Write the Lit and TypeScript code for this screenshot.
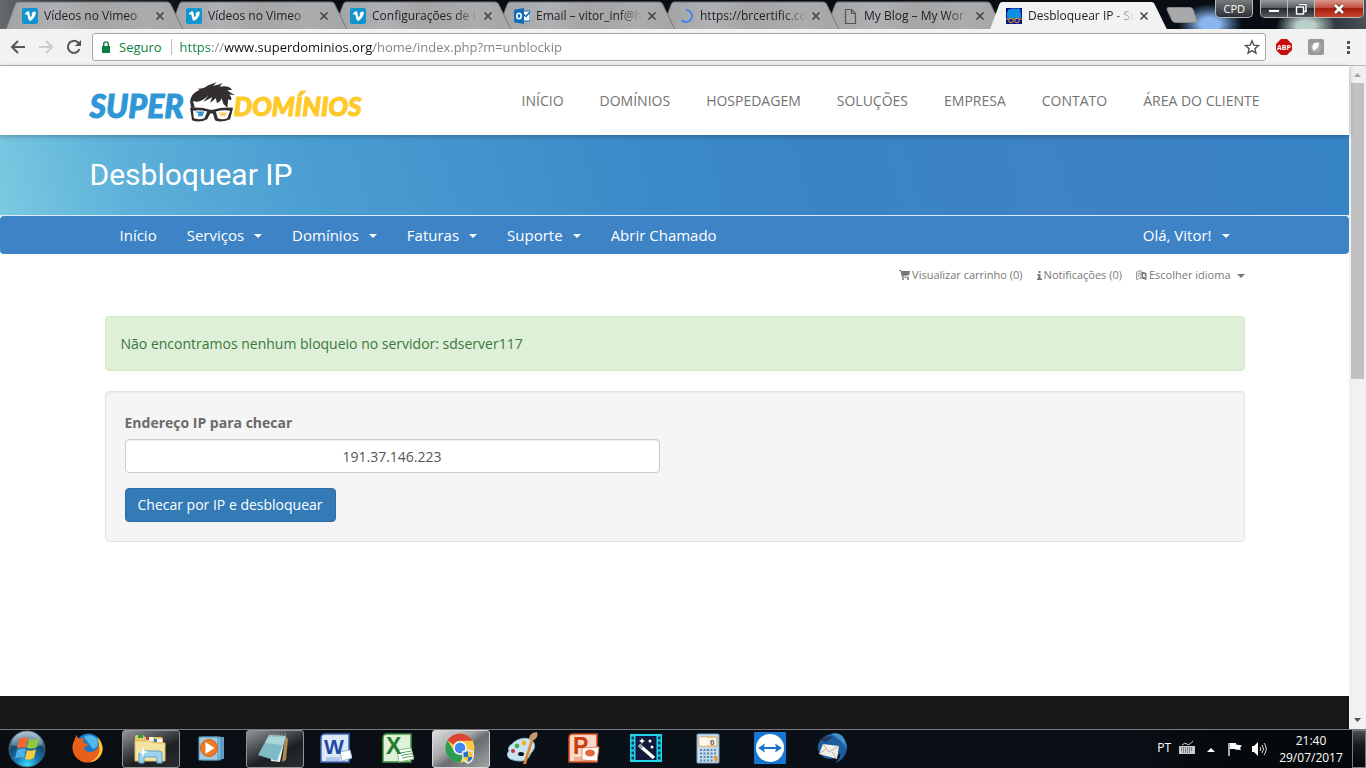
import { LitElement, html, css, svg, nothing } from "lit";
import { customElement, property } from "lit/decorators.js";
import { classMap } from "lit/directives/class-map.js";
import { styleMap } from "lit/directives/style-map.js";

const vimeo = svg`<rect width="16" height="16" rx="2" fill="#1295cf"/><path d="M2.8 5.4 5.2 3.6c1.2-.8 1.9-.3 2.2 1l.8 3.8c.2.9.6.9 1.1.2.8-1.1 1.2-1.9.2-2 .5-2.2 1.7-3.2 3.2-3 1.6.2 1.4 2 .4 4-1.2 2.3-3.6 5.2-5 5.2-1.2 0-1.7-1.4-2.1-3.3-.4-1.7-.6-3.3-1.2-3.3l-1.1.6z" fill="#fff"/>`;

const favicons: Record<string, unknown> = {
  vimeo,
  outlook: svg`<path d="M8 3h8v10H8z" fill="#fff" stroke="#0f6cba"/><path d="m8 5 4 3.500L16 4" fill="none" stroke="#0f6cba" stroke-width="1.500"/><path d="M0 1.800 10 0v16L0 14.200z" fill="#0f6cba"/><ellipse cx="5" cy="8" rx="2.200" ry="2.700" fill="none" stroke="#fff" stroke-width="1.600"/>`,
  loading: svg`<path d="M8 2a6 6 0 1 1-4.500 10" fill="none" stroke="#4a86f0" stroke-width="2"/>`,
  page: svg`<path d="M3.500 1.500h6l4 4v10h-10zM9.500 1.500v4h4" fill="none" stroke="#555" stroke-width="1.200"/>`,
  site: svg`<path d="M0 0h16v16H0z" fill="#0a118f"/><path d="M1 10V4l1-1V1l2 1 1-2 2 1 2-1 1 1 3-1v1l2 1-1 2 1 1v5z" fill="#0d8fdd"/><path d="M0 11h16" stroke="#e8a23b"/><circle cx="5" cy="12.500" r="2.300" fill="#15207d" stroke="#e8a23b"/><circle cx="11" cy="12.500" r="2.300" fill="#15207d" stroke="#e8a23b"/>`,
};

@customElement("browser-tab")
class BrowserTab extends LitElement {
  @property() icon = "page";
  @property() label = "";
  @property({ type: Boolean }) active = false;

  static styles = css`
    :host { display: block; height: 28px; }
    .tab { position: relative; display: flex; align-items: center; height: 28px; padding: 1px 19px 0 16px; box-sizing: border-box; }
    .shape { position: absolute; inset: 0; width: 100%; height: 100%; z-index: -1; }
    .favicon { width: 16px; height: 16px; flex: none; }
    .title { flex: 1; min-width: 0; margin: 0 1px 0 6px; overflow: hidden; white-space: nowrap; font-size: 12px; line-height: 16px; color: #222; mask-image: linear-gradient(90deg, #000 76%, transparent 97%); }
    .close { display: flex; border: 0; padding: 0; background: none; }
    .close svg { width: 10px; height: 10px; }
  `;

  render() {
    return html`<div class="tab">
      <svg class="shape" viewBox="0 0 178 28" preserveAspectRatio="none">
        <defs><linearGradient id="glass"><stop offset="0" stop-color="#a2a3a4"/><stop offset=".28" stop-color="#afb1b4"/><stop offset=".5" stop-color="#a5a5a6"/><stop offset=".8" stop-color="#aaacae"/><stop offset="1" stop-color="#a5a6a6"/></linearGradient></defs>
        <path d="M0 28.500 9 4Q10 1 12 1H161Q164 1 165 4L177 28.500" fill=${this.active ? "#f2f2f2" : "url(#glass)"} stroke=${this.active ? "none" : "#77797b"}></path>
      </svg>
      <svg class="favicon" viewBox="0 0 16 16">${favicons[this.icon]}</svg>
      <span class="title">${this.label}</span>
      <button class="close" aria-label="Fechar guia"><svg viewBox="0 0 10 10"><path d="m1.500 1.500 7 7m0-7-7 7" stroke="#444" stroke-width="1.600"/></svg></button>
    </div>`;
  }
}

const taskIcons: Record<string, unknown> = {
  firefox: svg`<circle cx="16.500" cy="14.500" r="13" fill="#1f78c4"/><path d="M12 5c3-3 10-2 13 2 2 5 0 9-4 10z" fill="#53b9ea"/><path d="M5 3c0 2 1 3 2 4 2-1 4-1 6 0-2 1-3 3-1 4l4 1c0 2-3 2-4 4 1 4 6 5 10 3 5-2 6-8 3-12 5 3 7 9 5 14-3 8-12 11-19 9C2 27-2 17 2 9c1-2 1-4 3-6z" fill="#e9601a"/><path d="M25 5c6 5 7 13 3 19-2 3-6 6-10 6 7-3 11-9 9-17 0-3-1-6-2-8z" fill="#fbcb35"/>`,
  folder: svg`<path d="M1 5q0-2 2-2h6l2 2h16q2 0 2 2v20H1z" fill="#e5c766"/><path d="M4 3h5v3H4z" fill="#2f9e3f"/><path d="M12 5h7v4h-7z" fill="#fff"/><path d="M12 5h3v3h-3z" fill="#cf3b2e"/><path d="M20 7h8v3h-8z" fill="#fff"/><path d="M20 7h3v3h-3z" fill="#2a7fd0"/><path d="M1 9h16l2 2h12v18H1z" fill="#f6e3a1" stroke="#dcc066"/><path d="M5 31v-9q0-3 3-3h17q3 0 3 3v9h-5v-6H10v6z" fill="#9ed3ee" stroke="#5ba4cf"/><path d="m9 14 1 5 5 1-5 1-1 5-1-5-5-1 5-1z" fill="#fff"/>`,
  media: svg`<path d="M9 5h19v22H9z" fill="#5e9fc7"/><path d="M6 5h19v23H6z" fill="#82bddd" stroke="#4d88b0"/><path d="M3 5h19v23H3z" fill="#9dcbe3" stroke="#5f9abc"/><circle cx="13" cy="16" r="8.500" fill="#ee7a24" stroke="#d45f10"/><path d="m9.500 10 9 6-9 6z" fill="#fff"/>`,
  notepad: svg`<path d="m27 4 3 3-2 21-4 2z" fill="#a98851"/><path d="m11 4 16 1-5 25-9-1z" fill="#e9f1f2"/><path d="m11 3 17 1-9 25-19-6z" fill="#80bac7"/><path d="m11 3 17 1-3 9-18-2z" fill="#a9d5dc"/><path d="M12 1v4m3-4v4m3-4v4m3-4v4m3-4v4m3-4v4" stroke="#8b9898"/>`,
  word: svg`<path d="M1 6q0-4 4-4h24v28H1z" fill="#dce7f8" stroke="#3d68b4" stroke-width="1.500"/><path d="M6 26h14M6 28h14" stroke="#8ba7d6"/><path d="m20 20 10-2 2 8-10 3z" fill="#fff" stroke="#9cb4db"/><text x="4" y="22" font-size="21" font-weight="700" font-family="Liberation Sans" fill="#1d4aa4">W</text>`,
  excel: svg`<path d="M1 6q0-4 4-4h24v28H1z" fill="#e0f1d9" stroke="#3b9143" stroke-width="1.500"/><path d="m15 18 14-2 3 11-15 3z" fill="#fff" stroke="#8abd83"/><path d="m18 21 11-2m-10 4.500 11-2M20 26l11-2" stroke="#52a35a"/><text x="4" y="22" font-size="23" font-weight="700" font-family="Liberation Sans" fill="#217b30">X</text>`,
  chrome: svg`<circle cx="16" cy="16" r="14.500" fill="#f8cb42"/><path d="M3.500 8.500A14.500 14.500 0 0 1 28.600 8.800H16a7 7 0 0 0-6.300 4z" fill="#dc4437"/><path d="M3.500 8.500A14.500 14.500 0 0 0 16 30.500l6-11a7 7 0 0 1-12.300-1z" fill="#2d9c56"/><circle cx="16" cy="16" r="6.800" fill="#fff"/><circle cx="16" cy="16" r="5.400" fill="#4387f4"/><path d="M24 17q3 2 6 2v5q0 5-6 8-6-3-6-8v-5q3 0 6-2z" fill="#e6e8ea"/><path d="M24 19v6h-4.500v-4.500Q22 20.300 24 19zM24 25h4.500q-.5 3-4.500 5z" fill="#2a70c9"/><path d="M24 19q2 1.300 4.500 1.500V25H24zM19.500 25H24v5q-4-2-4.500-5z" fill="#f4c62f"/>`,
  paint: svg`<path d="M4 27q-5-4-1-8-2-4 3-7C12 5 25 4 28 11c2 6-2 8-4 12-2 6-9 8-20 4z" fill="#c9e4f4" stroke="#7fa9c5"/><ellipse cx="15" cy="22" rx="3" ry="2" fill="#0a0f16"/><circle cx="7" cy="19" r="2" fill="#c7352e"/><circle cx="11" cy="14" r="2.400" fill="#4caf43"/><circle cx="18" cy="11" r="2.400" fill="#ecb030"/><path d="m25 7 2 2-7 23h-3z" fill="#e18830"/><path d="M23 7q0-6 8-7 2 6-5 9z" fill="#c69e6b"/>`,
  powerpoint: svg`<path d="M1 6q0-4 4-4h24v28H1z" fill="#fbd9c9" stroke="#d24719" stroke-width="1.500"/><path d="M6 26h12M6 28h12" stroke="#e08a67"/><path d="m14 16 17-1-2 14-15-1z" fill="#fff" stroke="#e08a67"/><ellipse cx="22" cy="21" rx="5" ry="3.500" fill="#e2673b"/><text x="5" y="22" font-size="23" font-weight="700" font-family="Liberation Sans" fill="#cb3d0e">P</text>`,
  movie: svg`<path d="M0 2h32v28H0z" fill="#1fd4e8"/><path d="M5.500 4h21v24h-21z" fill="#111a3a"/><path d="M1.500 4.500h2.500v3H1.500zm0 5h2.500v3H1.500zm0 5h2.500v3H1.500zm0 5h2.500v3H1.500zm0 5h2.500v3H1.500zM28 4.500h2.500v3H28zm0 5h2.500v3H28zm0 5h2.500v3H28zm0 5h2.500v3H28zm0 5h2.500v3H28z" fill="#0c3e5e"/><path d="m9 13 15 13" stroke="#fff" stroke-width="3.500"/><path d="m9 13 3 3" stroke="#99a" stroke-width="3"/><path d="m12 6 1 2 2 1-2 1-1 2-1-2-2-1 2-1z" fill="#fff"/><circle cx="20" cy="9" r="1.500" fill="#fff"/><circle cx="22" cy="15" r="1.500" fill="#fff"/>`,
  calc: svg`<rect x="5" y="2" width="22" height="29" rx="1" fill="#c6dcec" stroke="#7da3bf"/><path d="M7 5h18v9H7z" fill="#fbf3e2" stroke="#e09b3d"/><path d="M7 5h8v9H7z" fill="#fff" opacity=".5"/><text x="18" y="13" font-size="8" font-weight="700" font-family="Liberation Sans" fill="#44515c">0</text><path d="M8 18h17M8 21.500h17M8 25h17M8 28.500h14" stroke="#5b86aa" stroke-width="2" stroke-dasharray="2 1.500"/><path d="M22.500 24h3v5.500h-3z" fill="#ed9438"/>`,
  teamviewer: svg`<rect width="32" height="32" rx="1" fill="#1577d4"/><circle cx="16" cy="16" r="14" fill="#fff"/><path d="m4 16 7-4.500-1 3.500h12l-1-3.500 7 4.500-7 4.500 1-3.500H10l1 3.500z" fill="#1573cf"/>`,
  thunderbird: svg`<path d="M4 9C10 0 24-1 29 8c5 9 0 20-10 23 4-3 6-7 5-10-3 7-14 8-19 2-4-5-4-10-1-14z" fill="#1e5d9f"/><path d="M15 2c6-2 12 0 14 7l2 8q-5-9-16-15z" fill="#3e93cb"/><path d="m7 12 16 2-2 13-18-5z" fill="#f1eee8"/><path d="m7 12 6 8 10-6M3 22l7-5m11 10-5-7" fill="none" stroke="#b7afa5"/><path d="M3 9q5-6 14-4l-7 5q-4-2-7-1z" fill="#253b60"/>`,
};

const tasks = [
  { icon: "firefox", name: "Mozilla Firefox" },
  { icon: "folder", name: "Windows Explorer", open: true },
  { icon: "media", name: "Windows Media Player" },
  { icon: "notepad", name: "Bloco de notas", open: true },
  { icon: "word", name: "Microsoft Word" },
  { icon: "excel", name: "Microsoft Excel" },
  { icon: "chrome", name: "Google Chrome", open: true, current: true },
  { icon: "paint", name: "Paint" },
  { icon: "powerpoint", name: "Microsoft PowerPoint" },
  { icon: "movie", name: "Movie Maker" },
  { icon: "calc", name: "Calculadora" },
  { icon: "teamviewer", name: "TeamViewer" },
  { icon: "thunderbird", name: "Thunderbird" },
];

@customElement("task-bar")
class TaskBar extends LitElement {
  static styles = css`
    :host { display: flex; flex: none; height: 39px; box-sizing: border-box; border-top: 1px solid #777b7f; background: linear-gradient(90deg, #0a0e13, #0a1018 50%, #0b0f18 82%, #05090b 90%); color: #fff; font: 12px/17px "Open Sans", sans-serif; }
    button { border: 0; padding: 0; background: none; font: inherit; color: inherit; }
    svg { display: block; }
    .start { width: 54px; margin-right: 4px; display: flex; justify-content: center; align-items: center; }
    .orb { width: 38px; height: 38px; }
    .tasks { display: flex; flex: 1; }
    .task { width: 58px; margin: 0 2px; height: 38px; padding: 0 2px 2px 0; display: flex; justify-content: center; align-items: center; box-sizing: border-box; border: 1px solid transparent; border-radius: 3px; }
    .task svg { width: 32px; height: 32px; }
    .open { border-color: #909395; background: linear-gradient(155deg, #92969a 0, #4a4e51 35%, #1c2023 60%, #2a2e31); }
    .current { border-color: #d6d8d9; background: linear-gradient(145deg, #dcdddf 0, #a6a8aa 38%, #6a6d70 55%, #a0a2a4); }
    .tray { display: flex; align-items: center; }
    .lang { margin: 0 8px 4px 0; }
    .icon { width: 16px; height: 16px; margin-right: 8px; }
    .clock { width: 72px; margin: 0 5px 0 0; text-align: center; }
    .desk { width: 14px; height: 38px; border: 1px solid #777b7e; background: linear-gradient(#4b4f52, #15191c 40%, #05080a); }
  `;

  render() {
    return html`
      <button class="start" aria-label="Iniciar">
        <svg class="orb" viewBox="0 0 38 38">
          <defs><radialGradient id="orb" cx=".5" cy=".95" r=".9"><stop offset="0" stop-color="#3be0ff"/><stop offset=".35" stop-color="#147bb5"/><stop offset=".7" stop-color="#164870"/><stop offset="1" stop-color="#8aaabd"/></radialGradient></defs>
          <circle cx="19" cy="19" r="18" fill="url(#orb)" stroke="#405c70"/>
          <path d="M4 15a15 14 0 0 1 30 0q-14 5-30 0z" fill="#fff" opacity=".28"/>
          <path d="M11 9q5-3 9-1l-2 10q-4-2-9 1z" fill="#ee6a34"/><path d="M21 9q5 2 10-1l-2 9q-5 3-10 1z" fill="#92c83e"/>
          <path d="M9 20q5-3 9-1l-2 9q-4-2-9 1z" fill="#4fb0e8"/><path d="M19 20q5 2 9-1l-2 9q-5 3-9 1z" fill="#fbca3a"/>
        </svg>
      </button>
      <nav class="tasks">
        ${tasks.map((t) => html`<button class=${classMap({ task: true, open: !!t.open, current: !!t.current })} aria-label=${t.name}><svg viewBox="0 0 32 32">${taskIcons[t.icon]}</svg></button>`)}
      </nav>
      <div class="tray">
        <span class="lang">PT</span>
        <svg class="icon" viewBox="0 0 16 16"><path d="M3 4q3-3 5-1t6-3" fill="none" stroke="#ccc"/><path d="M0 5h16v8H0z" fill="#c9cbcc"/><path d="M2 7h12M2 9h12M4 11h8" stroke="#333" stroke-dasharray="1 1"/></svg>
        <svg class="icon" viewBox="0 0 16 16"><path d="m4 11 4-4 4 4z" fill="#fff"/></svg>
        <svg class="icon" viewBox="0 0 16 16"><path d="M2 2v13" stroke="#fff" stroke-width="1.300"/><path d="M3 2h6v1.500l6 1-2 2.500 1 2-6-.5V8H3z" fill="#fff"/></svg>
        <svg class="icon" viewBox="0 0 16 16"><path d="M1 5h2l4-4v14l-4-4H1z" fill="#fff"/><path d="M9 6q1.500 2 0 4m2-6q3 4 0 8m2-10q4.500 6 0 12" fill="none" stroke="#ddd"/></svg>
        <div class="clock">21:40<br />29/07/2017</div>
        <button class="desk" aria-label="Mostrar área de trabalho"></button>
      </div>`;
  }
}

const url = "https://www.superdominios.org/home/index.php?m=unblockip";

const tabs = [
  { icon: "vimeo", label: "Vídeos no Vimeo" },
  { icon: "vimeo", label: "Vídeos no Vimeo" },
  { icon: "vimeo", label: "Configurações de I" },
  { icon: "outlook", label: "Email – vitor_inf@h" },
  { icon: "loading", label: "https://brcertific.co" },
  { icon: "page", label: "My Blog – My Wor" },
  { icon: "site", label: "Desbloquear IP - Su", active: true },
];

const siteLinks = ["INÍCIO", "DOMÍNIOS", "HOSPEDAGEM", "SOLUÇÕES", "EMPRESA", "CONTATO", "ÁREA DO CLIENTE"];

const menu = [
  { label: "Início" },
  { label: "Serviços", drop: true },
  { label: "Domínios", drop: true },
  { label: "Faturas", drop: true },
  { label: "Suporte", drop: true },
  { label: "Abrir Chamado" },
];

const caret = html`<span class="caret"></span>`;

@customElement("app-root")
class AppRoot extends LitElement {
  static styles = css`
    :host { display: flex; flex-direction: column; height: 100vh; overflow: hidden; background: #fff; color: #6b6b6b; font: 14px/23px "Open Sans", sans-serif; }
    a { color: inherit; text-decoration: none; }
    button { border: 0; padding: 0; background: none; font: inherit; color: inherit; }
    input { font: inherit; }
    svg { display: block; flex: none; }

    .titlebar { display: flex; height: 29px; flex: none; justify-content: space-between; background: radial-gradient(ellipse 32px 20px at calc(100% - 156px) 24px, #8ab6ee 30%, #5d86b888 70%, transparent), radial-gradient(ellipse 30px 18px at calc(100% - 60px) 26px, #b9cec9 30%, transparent), linear-gradient(90deg, #65696c, #3a3f43 4%, #0a0f16 14%, #080d13 94%, #4a5157); }
    .strip { display: flex; align-items: flex-end; padding-left: 6px; flex: 0 1 1230px; min-width: 0; isolation: isolate; }
    .tab { position: relative; flex: 0 1 178px; min-width: 0; margin-right: -14px; }
    .new-tab { margin: 0 0 6px 12px; }
    .window { display: flex; align-items: flex-start; padding-right: 2px; }
    .user { height: 18px; padding: 0 7px; margin-right: 7px; border: 1px solid #b6babd; border-top: 0; border-radius: 0 0 5px 5px; background: linear-gradient(#777b7e, #2b3035); color: #fff; font-size: 11px; line-height: 16px; }
    .controls { display: flex; border: 1px solid #b6babd; border-top: 0; border-radius: 0 0 5px 5px; overflow: hidden; }
    .control { display: flex; justify-content: center; align-items: center; width: 27px; height: 17px; background: linear-gradient(#999c9e, #5c6063 45%, #23282c 50%, #54595d); border-right: 1px solid #b6babd; box-sizing: border-box; }
    .quit { width: 48px; border: 0; background: linear-gradient(#d9968c, #c4503e 45%, #a51d0b 50%, #c8452e); }

    .toolbar { display: flex; align-items: center; height: 37px; flex: none; box-sizing: border-box; padding: 0 10px; background: #f2f2f2; border-bottom: 1px solid #b9b9b9; }
    .tool { display: flex; width: 16px; height: 16px; margin-right: 12px; }
    .omnibox { display: flex; align-items: center; flex: 1; height: 28px; box-sizing: border-box; margin-left: -2px; padding: 0 5px 0 8px; border: 1px solid #a9a9a9; border-radius: 3px; background: #fff; line-height: 20px; }
    .secure { color: #0b8043; margin: 0 9px 0 8px; font-size: 13px; }
    .rule { width: 1px; height: 16px; background: #bbb; margin-right: 8px; }
    .url { flex: 1; min-width: 0; border: 0; padding: 0; outline: 0; font-size: 13px; line-height: 20px; color: transparent; background: linear-gradient(90deg, #0b8043 32px, #888 32px, #888 45px, #111 45px, #111 193px, #808080 193px); -webkit-background-clip: text; background-clip: text; }
    .ext { display: flex; align-items: center; gap: 16px; padding-left: 10px; }

    .viewport { display: flex; flex: 1; min-height: 0; }
    .page { display: flex; flex-direction: column; flex: 1; min-width: 0; }
    .container { width: 100%; max-width: 1170px; margin: 0 auto; box-sizing: border-box; }

    .site-header { position: relative; flex: none; box-shadow: 0 1px 5px rgba(0, 0, 0, 0.3); background: #fff; }
    .site-bar { display: flex; justify-content: space-between; align-items: center; height: 69px; }
    .logo { display: flex; align-items: center; padding-top: 10px; font: italic 900 32px/40px Lato, sans-serif; color: #2f97d6; -webkit-text-stroke: 1px currentColor; }
    .logo-face { width: 50px; height: 42px; margin: -6px 0 0 4px; }
    .logo-end { color: #ffc927; font-size: 26px; margin-left: -4px; }
    .site-nav { display: flex; gap: 36px; color: #737373; }

    .hero { flex: none; height: 79px; background: linear-gradient(76deg, #7bcae1, #5cb0d9 10%, #4a9dd1 24%, #3c8ac8 48%, #3984c5 60%, #3e82c5 82%, #3583c5); border-bottom: 1px solid #dcebf6; padding-top: 1px; box-sizing: content-box; }
    .hero-title { padding-top: 19px; font: 400 30px/40px Roboto, sans-serif; color: #fff; }
    .menu-bar { flex: none; background: #3e83c5; border-radius: 4px; color: #fff; font-size: 15px; line-height: 38px; }
    .menu { display: flex; padding: 0 15px; }
    .menu-item { display: flex; align-items: center; gap: 10px; padding: 0 15px; }
    .account { margin-left: auto; }
    .caret { border: 4px solid transparent; border-top-color: currentColor; border-bottom: 0; margin-top: 2px; }

    .content { flex: 1; padding: 0 15px; }
    .top-links { display: flex; justify-content: flex-end; gap: 14px; margin: 10px 0 30px; font-size: 11px; line-height: 22px; color: #777; }
    .top-link { display: flex; align-items: center; gap: 2px; }
    .top-link .caret { margin-left: 4px; }
    .alert { padding: 15px; border: 1px solid #d0e9c6; border-radius: 4px; background: #dff0d8; color: #3c763d; }
    .well { margin-top: 20px; padding: 19px; border: 1px solid #e3e3e3; border-radius: 4px; background: #f5f5f5; box-shadow: inset 0 1px 1px rgba(0, 0, 0, 0.05); }
    .label { display: block; margin-bottom: 5px; font-weight: 700; }
    .ip { display: block; width: calc(50% - 15px); height: 34px; box-sizing: border-box; margin-bottom: 15px; padding: 6px 12px; border: 1px solid #ccc; border-radius: 4px; box-shadow: inset 0 1px 1px rgba(0, 0, 0, 0.075); text-align: center; color: #555; background: #fff; }
    .submit { height: 34px; padding: 0 12px 2px; border: 1px solid #2e6da4; border-radius: 4px; background: #337ab7; color: #fff; }
    .site-footer { flex: none; height: 33px; background: #171717; }

    .scrollbar { display: flex; flex-direction: column; align-items: center; width: 17px; flex: none; background: #f1f1f1; }
    .arrow { width: 17px; height: 17px; }
    .track { flex: 1; width: 13px; }
    .thumb { height: 47%; background: #c1c1c1; }
  `;

  render() {
    return html`
      <header class="titlebar">
        <div class="strip">
          ${tabs.map((t, i) => html`<browser-tab class="tab" style=${styleMap({ zIndex: String(t.active ? 20 : 10 - i) })} icon=${t.icon} label=${t.label} ?active=${t.active}></browser-tab>`)}
          <button class="new-tab" aria-label="Nova guia"><svg width="32" height="16" viewBox="0 0 32 16"><path d="M3 .5h21q2 0 3 2l4 11q1 2-1 2H10q-3 0-4-2L1 2.500Q.5.500 3 .5z" fill="#a7a9aa" stroke="#888"/></svg></button>
        </div>
        <div class="window">
          <button class="user">CPD</button>
          <div class="controls">
            <button class="control" aria-label="Minimizar"><svg width="12" height="12" viewBox="0 0 12 12"><path d="M.5 6.500h11v3H.5z" fill="#fff" stroke="#444"/></svg></button>
            <button class="control" aria-label="Restaurar"><svg width="12" height="12" viewBox="0 0 12 12"><path d="M4 1.500h7v7H9M1.500 4h7v7h-7zM4 6.500h2v2H4z" fill="none" stroke="#333" stroke-width="2.500"/><path d="M4 1.500h7v7H9M1.500 4h7v7h-7z" fill="none" stroke="#fff" stroke-width="1.500"/></svg></button>
            <button class="control quit" aria-label="Fechar"><svg width="12" height="12" viewBox="0 0 12 12"><path d="m2 2 8 8m0-8-8 8" stroke="#5a2822" stroke-width="4"/><path d="m2 2 8 8m0-8-8 8" stroke="#fff" stroke-width="2.500"/></svg></button>
          </div>
        </div>
      </header>

      <div class="toolbar">
        <button class="tool" aria-label="Voltar"><svg width="16" height="16" viewBox="0 0 16 16"><path d="M15 8H2m6-6L2 8l6 6" fill="none" stroke="#555" stroke-width="2"/></svg></button>
        <button class="tool" aria-label="Avançar"><svg width="16" height="16" viewBox="0 0 16 16"><path d="M1 8h13M8 2l6 6-6 6" fill="none" stroke="#ccc" stroke-width="2"/></svg></button>
        <button class="tool" aria-label="Recarregar"><svg width="16" height="16" viewBox="0 0 16 16"><path d="M13.500 10A6 6 0 1 1 12 3.500L14 6" fill="none" stroke="#555" stroke-width="2"/><path d="M15 1v6H9z" fill="#555"/></svg></button>
        <div class="omnibox">
          <svg width="10" height="12" viewBox="0 0 10 12"><path d="M1 5h8v7H1z" fill="#0b8043"/><path d="M2.700 6V3.200a2.300 2.300 0 0 1 4.600 0V6" fill="none" stroke="#0b8043" stroke-width="1.400"/></svg>
          <span class="secure">Seguro</span><span class="rule"></span>
          <input class="url" aria-label="Endereço" .value=${url} />
          <svg width="16" height="16" viewBox="0 0 16 16"><path d="m8 1.800 1.800 4.300 4.700.4-3.600 3.100 1.100 4.600L8 11.700l-4 2.500 1.100-4.600-3.600-3.100 4.700-.4z" fill="none" stroke="#555" stroke-width="1.400"/></svg>
        </div>
        <div class="ext">
          <svg width="16" height="16" viewBox="0 0 16 16"><path d="M5 0h6l5 5v6l-5 5H5l-5-5V5z" fill="#c70d0d"/><text x="8" y="10.500" text-anchor="middle" font-family="Open Sans" font-weight="700" font-size="7" fill="#fff">ABP</text></svg>
          <svg width="16" height="16" viewBox="0 0 16 16"><rect width="16" height="16" rx="2" fill="#999"/><circle cx="8" cy="8" r="5.500" fill="#aaa"/><path d="M5 11q-2-5 2-7l4-.5q0 6-5 8z" fill="#fff"/></svg>
          <svg width="16" height="16" viewBox="0 0 16 16"><path d="M7 2h3v3H7zm0 5h3v3H7zm0 5h3v3H7z" fill="#555"/></svg>
        </div>
      </div>

      <div class="viewport">
        <div class="page">
          <header class="site-header">
            <div class="container site-bar">
              <a class="logo" href="#">SUPER<svg class="logo-face" viewBox="0 0 50 44">
                  <path d="M2 27 1 20Q2 12 11 8L9 7q7 0 10-3l10-4-4 4q6-1 10-3l-3 4q9-2 13 3l-5 1 8 5-6-1q3 3 2 6l-3-1-1 9-4-4-2-6q-1 4-5 5l-1-5-6 5 2-6-9 5 5-7q-8 9-16 6l2 7z" fill="#332f31"/>
                  <path d="M1 27q12-1 21 2h3q10-3 21-2l-3 12q-10 4-16 1l-2-7h-3l-3 6q-8 4-16 1z" fill="#332f31"/>
                  <path d="M4 30q8-1 15 1l-3 7q-5 2-11 0zM28 31q7-2 15-1l-3 8q-5 2-10 0z" fill="#fff"/>
                  <path d="M6 31h10l-2 5H9l1-3z" fill="#3296d2"/><path d="M30 32h10l-2 4h-6l1-2z" fill="#f7cf6d"/>
                </svg><span class="logo-end">DOMÍNIOS</span></a>
              <nav class="site-nav">${siteLinks.map((l) => html`<a href="#">${l}</a>`)}</nav>
            </div>
          </header>
          <div class="hero"><h1 class="container hero-title">Desbloquear IP</h1></div>
          <div class="menu-bar">
            <nav class="container menu">
              ${menu.map((m) => html`<a class="menu-item" href="#">${m.label}${m.drop ? caret : nothing}</a>`)}
              <a class="menu-item account" href="#">Olá, Vitor!${caret}</a>
            </nav>
          </div>
          <main class="container content">
            <div class="top-links">
              <a class="top-link" href="#"><svg width="11" height="10" viewBox="0 0 11 10"><path d="M0 0h2l.5 1H11l-.8 4.300L3.800 6l.2.800h6v1H3L1.500 1H0z" fill="#777"/><circle cx="4" cy="9" r="1" fill="#777"/><circle cx="9" cy="9" r="1" fill="#777"/></svg>Visualizar carrinho (0)</a>
              <a class="top-link" href="#"><svg width="5" height="9" viewBox="0 0 5 9"><path d="M1.500 0h2v2h-2zM.5 3h3v4.500H5V9H0V7.500h1.200v-3H.5z" fill="#777"/></svg>Notificações (0)</a>
              <a class="top-link" href="#"><svg width="11" height="11" viewBox="0 0 11 11"><path d="m5.500 1.500 5 1.500v7l-5-1.500z" fill="#777"/><path d="M.5 2 5 .5V8L.5 9.500zM1.500 4l2.500-1M2 7l1.500-3" fill="none" stroke="#999"/><path d="m7 7 1-3 1 3.500" fill="none" stroke="#fff"/></svg>Escolher idioma${caret}</a>
            </div>
            <div class="alert" role="alert">Não encontramos nenhum bloqueio no servidor: sdserver117</div>
            <form class="well" @submit=${(e: Event) => e.preventDefault()}>
              <label class="label" for="ip">Endereço IP para checar</label>
              <input class="ip" id="ip" value="191.37.146.223" />
              <button class="submit">Checar por IP e desbloquear</button>
            </form>
          </main>
          <footer class="site-footer"></footer>
        </div>
        <div class="scrollbar">
          <svg class="arrow" viewBox="0 0 17 17"><path d="m5 11 3.500-4 3.500 4z" fill="#a3a3a3"/></svg>
          <div class="track"><div class="thumb"></div></div>
          <svg class="arrow" viewBox="0 0 17 17"><path d="m5 6 3.500 4L12 6z" fill="#505050"/></svg>
        </div>
      </div>

      <task-bar></task-bar>
    `;
  }
}
